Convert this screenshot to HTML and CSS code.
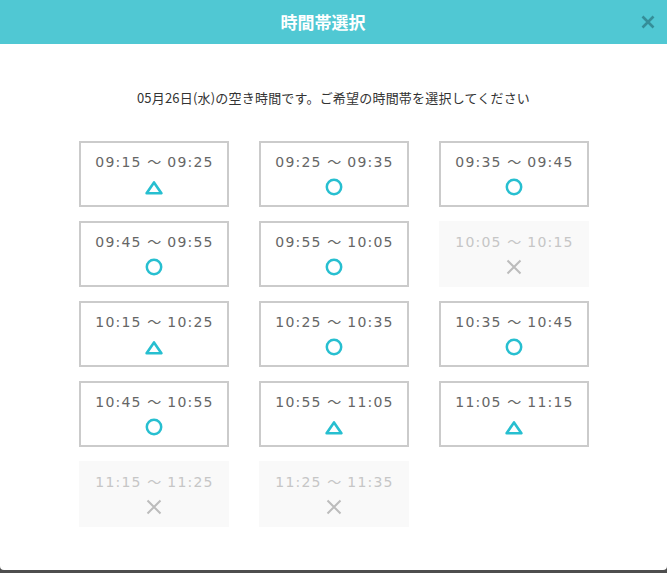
FILE: index.html
```html
<!DOCTYPE html>
<html lang="ja">
<head>
<meta charset="utf-8">
<title>時間帯選択</title>
<link rel="stylesheet" href="styles.css">
</head>
<body>
<div class="modal">
  <header class="modal-header">
    <h1 class="modal-title">時間帯選択</h1>
    <button class="close" aria-label="閉じる">
      <svg width="16" height="16" viewBox="0 0 16 16"><path d="M2.5 2.5L13.5 13.5M13.5 2.5L2.5 13.5" stroke="currentColor" stroke-width="2.6" stroke-linecap="butt"/></svg>
    </button>
  </header>
  <div class="modal-body">
    <p class="lead">05月26日(水)の空き時間です。ご希望の時間帯を選択してください</p>
    <div class="slots">
      <div class="slot"><span class="time">09:15 <span class="wave">〜</span> 09:25</span><svg class="icon tri" viewBox="0 0 18 18"><polygon points="9,4.4 16.4,15.2 1.6,15.2"/></svg></div>
      <div class="slot"><span class="time">09:25 <span class="wave">〜</span> 09:35</span><svg class="icon circ" viewBox="0 0 18 18"><circle cx="9" cy="9" r="7.2"/></svg></div>
      <div class="slot"><span class="time">09:35 <span class="wave">〜</span> 09:45</span><svg class="icon circ" viewBox="0 0 18 18"><circle cx="9" cy="9" r="7.2"/></svg></div>

      <div class="slot"><span class="time">09:45 <span class="wave">〜</span> 09:55</span><svg class="icon circ" viewBox="0 0 18 18"><circle cx="9" cy="9" r="7.2"/></svg></div>
      <div class="slot"><span class="time">09:55 <span class="wave">〜</span> 10:05</span><svg class="icon circ" viewBox="0 0 18 18"><circle cx="9" cy="9" r="7.2"/></svg></div>
      <div class="slot full"><span class="time">10:05 <span class="wave">〜</span> 10:15</span><svg class="icon cross" viewBox="0 0 18 18"><path d="M2.5 2.5L15.5 15.5M15.5 2.5L2.5 15.5"/></svg></div>

      <div class="slot"><span class="time">10:15 <span class="wave">〜</span> 10:25</span><svg class="icon tri" viewBox="0 0 18 18"><polygon points="9,4.4 16.4,15.2 1.6,15.2"/></svg></div>
      <div class="slot"><span class="time">10:25 <span class="wave">〜</span> 10:35</span><svg class="icon circ" viewBox="0 0 18 18"><circle cx="9" cy="9" r="7.2"/></svg></div>
      <div class="slot"><span class="time">10:35 <span class="wave">〜</span> 10:45</span><svg class="icon circ" viewBox="0 0 18 18"><circle cx="9" cy="9" r="7.2"/></svg></div>

      <div class="slot"><span class="time">10:45 <span class="wave">〜</span> 10:55</span><svg class="icon circ" viewBox="0 0 18 18"><circle cx="9" cy="9" r="7.2"/></svg></div>
      <div class="slot"><span class="time">10:55 <span class="wave">〜</span> 11:05</span><svg class="icon tri" viewBox="0 0 18 18"><polygon points="9,4.4 16.4,15.2 1.6,15.2"/></svg></div>
      <div class="slot"><span class="time">11:05 <span class="wave">〜</span> 11:15</span><svg class="icon tri" viewBox="0 0 18 18"><polygon points="9,4.4 16.4,15.2 1.6,15.2"/></svg></div>

      <div class="slot full"><span class="time">11:15 <span class="wave">〜</span> 11:25</span><svg class="icon cross" viewBox="0 0 18 18"><path d="M2.5 2.5L15.5 15.5M15.5 2.5L2.5 15.5"/></svg></div>
      <div class="slot full"><span class="time">11:25 <span class="wave">〜</span> 11:35</span><svg class="icon cross" viewBox="0 0 18 18"><path d="M2.5 2.5L15.5 15.5M15.5 2.5L2.5 15.5"/></svg></div>
    </div>
  </div>
</div>
</body>
</html>
```

FILE: styles.css
```css
html, body {
  margin: 0;
  padding: 0;
}
body {
  background: #4e4e4e;
  font-family: "Noto Sans CJK JP", "Noto Sans", sans-serif;
}
.modal {
  height: 570px;
  background: #fff;
  border-radius: 0 0 4px 4px;
  overflow: hidden;
}
.modal-header {
  height: 44px;
  background: #50c8d3;
  display: flex;
  align-items: center;
  padding-right: 10px;
}
.modal-title {
  flex: 1;
  margin: 0;
  padding-left: 7px;
  text-align: center;
  color: #fff;
  font-size: 17px;
  font-weight: bold;
  line-height: 44px;
}
.close {
  width: 18px;
  height: 18px;
  padding: 0;
  margin: 0;
  border: 0;
  background: transparent;
  color: rgba(20, 70, 80, 0.45);
  display: flex;
  align-items: center;
  justify-content: center;
}
.modal-body {
  padding-top: 44px;
}
.lead {
  margin: 0;
  text-align: center;
  font-size: 13px;
  letter-spacing: 0.2px;
  line-height: 20px;
  color: #333;
}
.slots {
  margin-top: 33px;
  display: grid;
  grid-template-columns: repeat(3, 150px);
  column-gap: 30px;
  row-gap: 14px;
  justify-content: center;
  padding-left: 1px;
}
.slot {
  box-sizing: border-box;
  height: 66px;
  border: 2px solid #cbcbcb;
  padding-top: 8px;
  display: flex;
  flex-direction: column;
  align-items: center;
  background: #fff;
}
.slot.full {
  border-color: #f9f9f9;
  background: #f9f9f9;
}
.time {
  font-family: "DejaVu Sans", Verdana, sans-serif;
  font-size: 14px;
  letter-spacing: 1.2px;
  line-height: 21px;
  color: #666;
  padding-left: 1px;
}
.wave {
  font-family: "Noto Sans CJK JP", sans-serif;
  letter-spacing: 0.4px;
}
.slot.full .time {
  color: #c6c6c6;
}
.icon {
  width: 18px;
  height: 18px;
  margin-top: 5px;
  fill: none;
}
.icon.tri polygon {
  stroke: #27bfd0;
  stroke-width: 2.6;
  stroke-linejoin: round;
}
.icon.circ circle {
  stroke: #27bfd0;
  stroke-width: 2.5;
}
.icon.cross path {
  stroke: #bcbcbc;
  stroke-width: 2;
}
```
